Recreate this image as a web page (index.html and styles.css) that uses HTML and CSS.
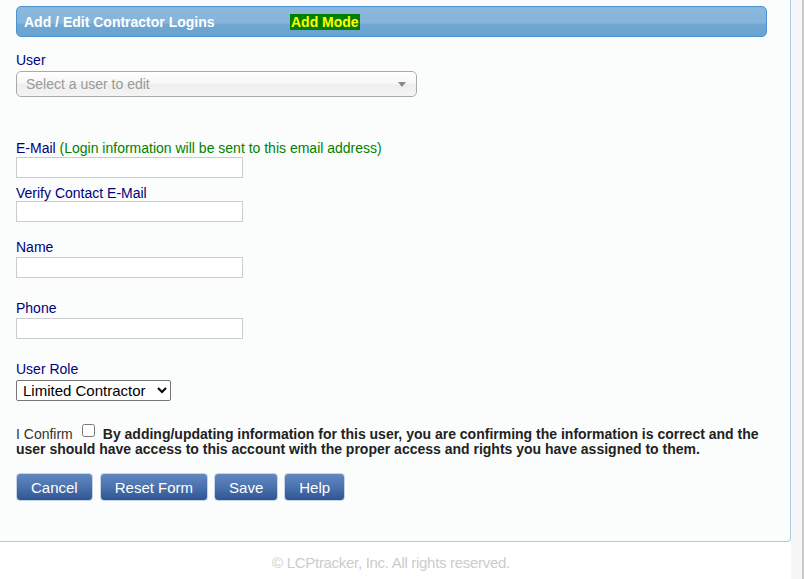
FILE: index.html
```html
<!DOCTYPE html>
<html>
<head>
<meta charset="utf-8">
<link rel="stylesheet" href="styles.css">
</head>
<body>
<div class="page">
  <div class="panel">
    <div class="header">
      <span class="title">Add / Edit Contractor Logins</span>
      <span class="mode">Add Mode</span>
    </div>

    <div class="field f-user">
      <label class="lbl">User</label>
      <div class="chosen"><span>Select a user to edit</span><i class="caret"></i></div>
    </div>

    <div class="field f-email">
      <label class="lbl">E-Mail <span class="note">(Login information will be sent to this email address)</span></label>
      <input class="txt" type="text">
    </div>

    <div class="field f-verify">
      <label class="lbl">Verify Contact E-Mail</label>
      <input class="txt" type="text">
    </div>

    <div class="field f-name">
      <label class="lbl">Name</label>
      <input class="txt" type="text">
    </div>

    <div class="field f-phone">
      <label class="lbl">Phone</label>
      <input class="txt" type="text">
    </div>

    <div class="field f-role">
      <label class="lbl">User Role</label>
      <select class="role"><option>Limited Contractor</option></select>
    </div>

    <div class="confirm">
      <span class="iconfirm">I Confirm</span><input type="checkbox" class="chk"><b>By adding/updating information for this user, you are confirming the information is correct and the user should have access to this account with the proper access and rights you have assigned to them.</b>
    </div>

    <div class="buttons">
      <button class="btn">Cancel</button>
      <button class="btn">Reset Form</button>
      <button class="btn">Save</button>
      <button class="btn">Help</button>
    </div>
  </div>
  <div class="footer">© LCPtracker, Inc. All rights reserved.</div>
</div>
</body>
</html>
```

FILE: styles.css
```css
html, body {
  margin: 0;
  padding: 0;
  background: #ffffff;
  font-family: "Liberation Sans", Arial, sans-serif;
}
.page {
  width: 804px;
  height: 579px;
  background: linear-gradient(to right, #ffffff 0, #ffffff 791px, #f7f7f7 791px, #f7f7f7 802px, #c8c8c8 802px, #c8c8c8 804px);
  overflow: hidden;
}
.panel {
  width: 751px;
  padding: 6px 23px 40px 16px;
  background: #fbfdfd;
  border-right: 1px solid #a9cce6;
  border-bottom: 1px solid #a9cce6;
  border-bottom-right-radius: 4px;
  height: 495px;
}
.header {
  height: 29px;
  border: 1px solid #4b93d2;
  border-radius: 5px;
  background: linear-gradient(to bottom, #8bb8dc 0, #86b4da 55%, #6fa6d2 60%, #6aa3d0 100%);
  display: flex;
  align-items: center;
  padding-left: 7px;
  font-weight: bold;
  font-size: 14px;
}
.title {
  color: #ffffff;
  width: 266px;
}
.mode {
  background: #008000;
  color: #ffff00;
  padding: 0 1px;
  line-height: 16px;
}
.lbl {
  display: block;
  color: #000080;
  font-size: 14px;
  line-height: 16px;
}
.note {
  color: #008000;
}
.f-user { margin-top: 15px; }
.f-email { margin-top: 43px; }
.f-verify { margin-top: 7px; }
.f-name { margin-top: 17px; }
.f-phone { margin-top: 22px; }
.f-role { margin-top: 22px; }
.f-name .lbl, .f-phone .lbl { margin-bottom: 2px; }
.f-user .lbl { margin-bottom: 3px; }
.f-email .lbl { margin-bottom: 1px; }
.f-role .lbl { margin-bottom: 3px; }

.chosen {
  height: 24px;
  border: 1px solid #aaaaaa;
  border-radius: 5px;
  background: linear-gradient(to bottom, #ffffff 0, #f6f6f6 50%, #eeeeee 52%, #f4f4f4 100%);
  display: flex;
  align-items: center;
  justify-content: space-between;
  padding: 0 10px 0 9px;
  box-sizing: content-box;
  width: 380px;
  color: #999999;
  font-size: 14px;
}
.caret {
  width: 0;
  height: 0;
  border-left: 4px solid transparent;
  border-right: 4px solid transparent;
  border-top: 5px solid #888888;
}
.txt {
  display: block;
  box-sizing: border-box;
  width: 227px;
  height: 21px;
  margin: 0;
  border: 1px solid #cccccc;
  background: #ffffff;
  padding: 0 3px;
}
.role {
  display: block;
  height: 21px;
  width: 155px;
  margin: 0;
  font-family: "Liberation Sans", Arial, sans-serif;
  font-size: 15px;
  color: #000000;
  border: 1px solid #767676;
  border-radius: 2px;
  background: #ffffff;
  padding: 0 0 0 2px;
}
.confirm {
  margin-top: 23px;
  font-size: 14px;
  line-height: 15px;
  color: #222222;
}
.iconfirm {
  color: #333333;
  font-size: 14px;
}
.chk {
  margin: 0 8px 0 9px;
  width: 13px;
  height: 13px;
  vertical-align: 2px;
}
.confirm b {
  font-weight: bold;
}
.buttons {
  display: flex;
  gap: 6px;
  margin-top: 16px;
}
.btn {
  height: 28px;
  padding: 0 14px;
  font-family: "Liberation Sans", Arial, sans-serif;
  font-size: 15px;
  color: #ffffff;
  border: 1px solid #c5d3e6;
  border-radius: 4px;
  background: linear-gradient(to bottom, #6288c0 0, #4a72ad 50%, #2d5694 100%);
  cursor: pointer;
}
.btn:first-child { margin-right: 1px; }
.footer {
  width: 782px;
  text-align: center;
  margin-top: 12px;
  font-family: "Liberation Sans", Arial, sans-serif;
  font-size: 15px;
  letter-spacing: -0.3px;
  color: #cccccc;
}
```
